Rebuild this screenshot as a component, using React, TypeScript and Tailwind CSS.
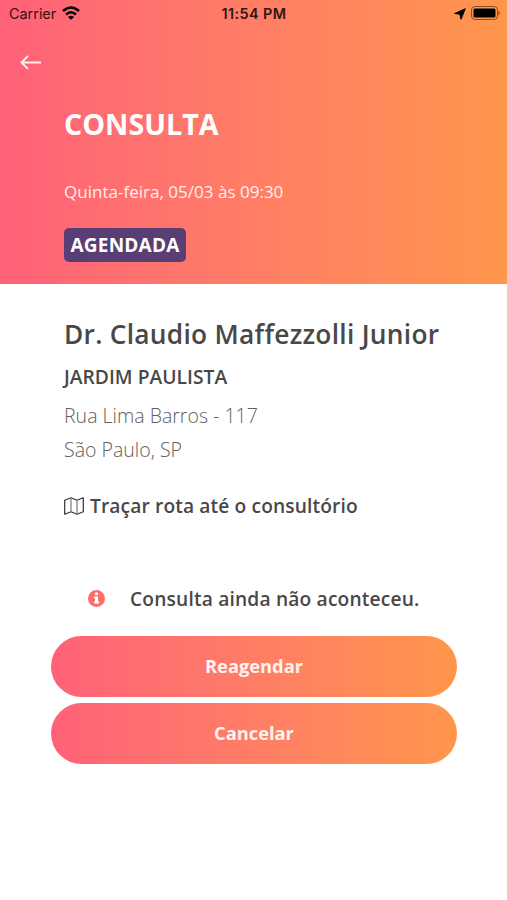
export default function App() {
  return (
    <main className="h-[900px] w-[507px] overflow-hidden bg-white font-['Open_Sans',sans-serif] text-[#484848]">
      <header className="h-[284px] bg-linear-to-r from-[#ff6178] to-[#ff964b] text-white">
        <div className="grid h-7 grid-cols-3 items-center pl-[9px] pr-[6px] font-['Inter',sans-serif] text-[14.4px] text-[#301515]">
          <div className="flex items-center gap-1.5">
            <span>Carrier</span>
            <svg className="-mt-0.5" width="18" height="14" viewBox="0 0 18 14" fill="none" stroke="black" strokeWidth="2.6">
              <path d="M1 5Q9-2 17 5M4 8.5Q9 4 14 8.5" />
              <path d="M6 11Q9 8.4 12 11L9 13.8Z" fill="black" stroke="none" />
            </svg>
          </div>
          <span className="whitespace-nowrap pr-0.5 text-center text-[14.4px] font-semibold tracking-[0.4px]">11:54 PM</span>
          <div className="flex items-center justify-end gap-[5px]">
            <svg width="12" height="12" viewBox="0 0 12 12" fill="black"><path d="M11.3.7L7 11.3L5.8 6.2L.7 5.5Z" stroke="black" strokeWidth="1" strokeLinejoin="round" /></svg>
            <svg className="-mt-0.5" width="30" height="14" viewBox="0 0 30 14">
              <rect x=".5" y=".5" width="26" height="13" rx="3.5" fill="none" stroke="#0007" />
              <rect x="2.5" y="2.5" width="22" height="9" rx="1.5" />
              <path d="M27.5 4.5Q30.5 7 27.5 9.5Z" fill="#0007" />
            </svg>
          </div>
        </div>
        <div className="pl-5 pt-[27px]">
          <svg className="block" width="22" height="15" viewBox="0 0 22 15" fill="none" stroke="#fff0f0" strokeWidth="1.8"><path d="M21 7.5H1.5M8 1L1.5 7.5L8 14" /></svg>
        </div>
        <div className="pl-16 pt-[34px]">
          <h1 className="text-[28.7px] font-bold leading-10">CONSULTA</h1>
          <p className="mt-9 text-[17.05px] leading-6 text-[#fff0ee]">Quinta-feira, 05/03 às 09:30</p>
          <span className="mt-6 flex h-[34px] w-[122px] items-center justify-center rounded-[5px] bg-[#583e74] pt-px text-[19px] font-bold tracking-[0.2px]">AGENDADA</span>
        </div>
      </header>
      <section className="pl-16 pt-[30px]">
        <h2 className="text-[26.3px] font-semibold leading-10 tracking-[0.28px]">Dr. Claudio Maffezzolli Junior</h2>
        <h3 className="mt-2 text-[19.3px] font-semibold leading-[30px]">JARDIM PAULISTA</h3>
        <p className="mt-[7px] text-[19.55px] font-light leading-[34px] text-[#606060]">Rua Lima Barros - 117<br />São Paulo, SP</p>
        <a className="mt-[24px] flex h-[30px] items-center gap-[6px] text-[19.2px] font-semibold tracking-[0.12px]">
          <svg width="20" height="18" viewBox="0 0 20 18" fill="none" stroke="#333" strokeWidth="1.2" strokeLinejoin="round">
            <path d="M.7 3.2L7 .8L13 3.2L19.3.8V14.8L13 17.2L7 14.8L.7 17.2Z" />
            <path d="M7 .8V14.8M13 3.2V17.2" stroke="#777" />
          </svg>
          Traçar rota até o consultório
        </a>
        <div className="mt-[63px] flex h-[30px] items-center gap-[25px] pl-6 text-[19.2px] font-semibold tracking-[0.17px]">
          <svg className="-mt-px" width="17" height="17" viewBox="0 0 17 17">
            <circle cx="8.5" cy="8.5" r="8.5" fill="#ff6e6a" />
            <path d="M7 2.5H10V5H7ZM6 6.5H10V11.5H11V13.5H6V11.5H7V8.5H6Z" fill="white" />
          </svg>
          Consulta ainda não aconteceu.
        </div>
      </section>
      <div className="ml-[51px] mt-[22px] flex w-[406px] flex-col gap-[6px] text-[18.3px] font-bold text-[#fff4ef]">
        <button className="h-[61px] rounded-full bg-linear-to-r from-[#ff6178] to-[#ff964b] pb-px">Reagendar</button>
        <button className="h-[61px] rounded-full bg-linear-to-r from-[#ff6178] to-[#ff964b] pb-px">Cancelar</button>
      </div>
    </main>
  )
}
